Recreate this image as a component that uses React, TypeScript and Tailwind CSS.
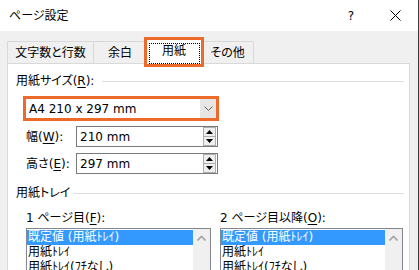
import React from "react";

function Spinner() {
  return (
    <div className="flex flex-col w-[13px] h-[19px] mr-[1px]">
      <div className="h-[10px] border border-[#adadad] bg-[#efefef] flex items-center justify-center">
        <svg width="7" height="4" viewBox="0 0 7 4"><polygon points="3.5,0 7,4 0,4" fill="#000" /></svg>
      </div>
      <div className="h-[9px] border border-t-0 border-[#adadad] bg-[#efefef] flex items-center justify-center">
        <svg width="7" height="4" viewBox="0 0 7 4"><polygon points="0,0 7,0 3.5,4" fill="#000" /></svg>
      </div>
    </div>
  );
}

function ListBox({ width }: { width: string }) {
  return (
    <div className={`${width} h-[60px] border border-[#828790] bg-white flex`}>
      <div className="flex-1 pt-[1px] flex flex-col leading-[15px] whitespace-nowrap overflow-hidden">
        <div className="h-[15px] bg-[#3399ff] text-white pl-[1px]">既定値 (用紙ﾄﾚｲ)</div>
        <div className="h-[15px] pl-[1px]">用紙ﾄﾚｲ</div>
        <div className="h-[15px] pl-[1px]">用紙ﾄﾚｲ(ﾌﾁなし)</div>
      </div>
      <div className="w-[17px] bg-[#f0f0f0] flex justify-center pt-[6px]">
        <svg width="9" height="6" viewBox="0 0 9 6"><polyline points="0.5,5.5 4.5,1.5 8.5,5.5" fill="none" stroke="#a3a3a3" strokeWidth="1.6" /></svg>
      </div>
    </div>
  );
}

export default function App() {
  return (
    <div className="w-[419px] h-[270px] overflow-hidden bg-[#f0f0f0] border-r border-[#3a3a3a] flex flex-col text-[12px] leading-[16px] text-black font-['DejaVu_Sans','Noto_Sans_CJK_JP',sans-serif] [font-feature-settings:'palt']">
      {/* title bar */}
      <div className="h-[31px] bg-white flex items-center shrink-0">
        <span className="ml-[9px]">ページ設定</span>
        <span className="ml-auto">?</span>
        <svg className="ml-[36px] mr-[17px]" width="11" height="11" viewBox="0 0 11 11">
          <line x1="0.5" y1="0.5" x2="10.5" y2="10.5" stroke="#000" strokeWidth="1" />
          <line x1="10.5" y1="0.5" x2="0.5" y2="10.5" stroke="#000" strokeWidth="1" />
        </svg>
      </div>

      {/* tabs */}
      <div className="h-[32px] shrink-0 flex items-end pl-[7px] relative z-10">
        <div className="w-[87px] h-[22px] border border-b-0 border-[#d9d9d9] flex items-center justify-center">文字数と行数</div>
        <div className="-ml-px w-[54px] h-[22px] border border-b-0 border-[#d9d9d9] flex items-center justify-center">余白</div>
        <div className="-ml-[3px] w-[60px] h-[25px] -mb-px bg-white border border-b-0 border-[#d9d9d9] flex items-center justify-center relative z-10 pb-[2px]">
          用紙
          <div className="absolute left-[4px] top-[3px] w-[51px] h-[21px] border border-dotted border-black" />
          <div className="absolute -left-px -top-[3px] w-[60px] h-[30px] border-[3px] border-[#ee6a2a]" />
        </div>
        <div className="-ml-[3px] w-[53px] h-[22px] border border-b-0 border-[#d9d9d9] flex items-center justify-center">その他</div>
      </div>

      {/* panel */}
      <div className="ml-[7px] w-[403px] flex-1 bg-white border border-[#d9d9d9] flex flex-col">
        <div className="mt-[9px] h-[16px] flex items-center pl-[8px]">
          <span>用紙サイズ(<span className="underline underline-offset-2">R</span>):</span>
          <div className="flex-1 h-px bg-[#dcdcdc] ml-[8px] mr-[5px]" />
        </div>

        <div className="mt-[7px] ml-[15px] w-[196px] h-[25px] border-[3px] border-[#ee6a2a] bg-white flex">
          <div className="flex-1 flex items-center pl-[3px]">A4 210 x 297 mm</div>
          <div className="w-[16px] bg-[#e6e6e6] flex items-center justify-center">
            <svg width="9" height="5" viewBox="0 0 9 5"><polyline points="0.5,0.5 4.5,4.5 8.5,0.5" fill="none" stroke="#606060" strokeWidth="1" /></svg>
          </div>
        </div>

        <div className="mt-[5px] flex items-center">
          <div className="w-[68px] pl-[18px]">幅(<span className="underline underline-offset-2">W</span>):</div>
          <div className="w-[142px] h-[21px] border border-[#7a7a7a] bg-white flex items-center">
            <div className="flex-1 pl-[3px]">210 mm</div>
            <Spinner />
          </div>
        </div>

        <div className="mt-[6px] flex items-center">
          <div className="w-[68px] pl-[18px]">高さ(<span className="underline underline-offset-2">E</span>):</div>
          <div className="w-[142px] h-[21px] border border-[#7a7a7a] bg-white flex items-center">
            <div className="flex-1 pl-[3px]">297 mm</div>
            <Spinner />
          </div>
        </div>

        <div className="mt-[11px] h-[16px] flex items-center pl-[8px]">
          <span>用紙トレイ</span>
          <div className="flex-1 h-px bg-[#dcdcdc] ml-[4px] mr-[5px]" />
        </div>

        <div className="mt-[9px] flex">
          <div className="ml-[18px] w-[194px] flex flex-col">
            <div className="h-[16px]">1 ページ目(<span className="underline underline-offset-2">F</span>):</div>
            <div className="mt-[2px]"><ListBox width="w-[185px]" /></div>
          </div>
          <div className="flex flex-col">
            <div className="h-[16px]">2 ページ目以降(<span className="underline underline-offset-2">O</span>):</div>
            <div className="mt-[2px]"><ListBox width="w-[183px]" /></div>
          </div>
        </div>
      </div>
    </div>
  );
}
